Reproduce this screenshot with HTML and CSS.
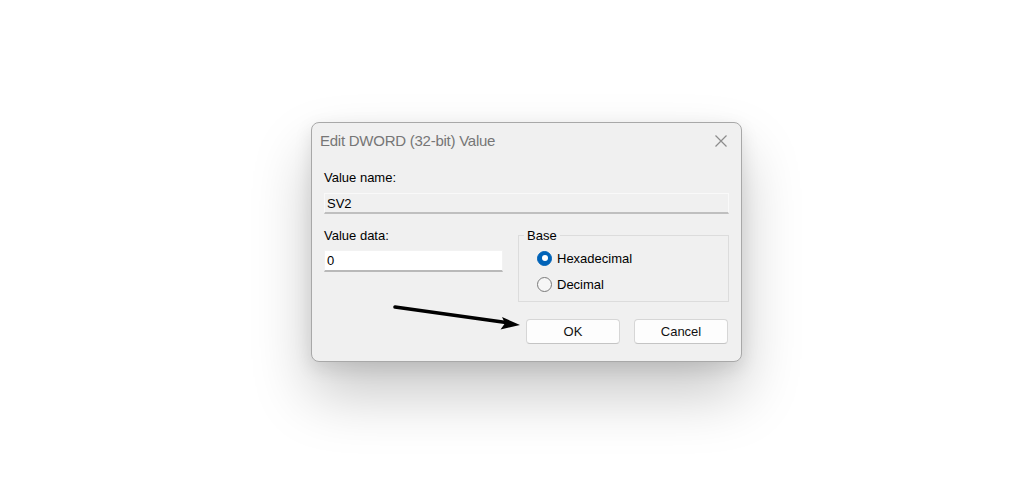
FILE: index.html
```html
<!DOCTYPE html>
<html lang="en">
<head>
<meta charset="utf-8">
<title>Edit DWORD (32-bit) Value</title>
<link rel="stylesheet" href="styles.css">
</head>
<body>
<div class="page">
  <div class="dialog">
    <div class="titlebar">
      <span class="title">Edit DWORD (32-bit) Value</span>
      <svg class="close" width="12" height="12" viewBox="0 0 12 12"><path d="M0.5 0.5 L11.5 11.5 M11.5 0.5 L0.5 11.5" stroke="#8c8c8c" stroke-width="1.2" fill="none"/></svg>
    </div>
    <div class="body">
      <div class="lbl lbl-name">Value name:</div>
      <div class="field field-ro">SV2</div>
      <div class="row">
        <div class="col-data">
          <div class="lbl lbl-data">Value data:</div>
          <div class="field field-edit">0</div>
        </div>
        <fieldset class="base">
          <legend>Base</legend>
          <div class="opt"><span class="radio radio-on"></span><span>Hexadecimal</span></div>
          <div class="opt"><span class="radio"></span><span>Decimal</span></div>
        </fieldset>
      </div>
      <div class="buttons">
        <div class="btn">OK</div>
        <div class="btn">Cancel</div>
      </div>
    </div>
  </div>
  <svg class="arrow" width="1024" height="484" viewBox="0 0 1024 484">
    <line x1="395" y1="307" x2="506" y2="322.5" stroke="#000" stroke-width="3.6" stroke-linecap="round"/>
    <polygon points="520,325 502,317 505,323.2 500.5,329.5" fill="#000"/>
  </svg>
</div>
</body>
</html>
```
FILE: styles.css
```css
html, body {
  margin: 0;
  padding: 0;
  background: #ffffff;
}
body {
  font-family: "Liberation Sans", Arial, sans-serif;
  font-size: 13px;
  color: #000;
}
.page {
  position: relative;
  width: 1024px;
  height: 484px;
  padding: 122px 0 0 311px;
  box-sizing: border-box;
  overflow: hidden;
}
.dialog {
  width: 431px;
  box-sizing: border-box;
  background: #f0f0f0;
  border: 1px solid #a8a8a8;
  border-radius: 8px;
  box-shadow: 0 32px 60px rgba(0, 0, 0, 0.22), 0 6px 18px rgba(0, 0, 0, 0.1);
}
.titlebar {
  height: 36px;
  display: flex;
  align-items: center;
  justify-content: space-between;
  padding-left: 8px;
}
.title {
  font-size: 15px;
  line-height: 18px;
  letter-spacing: -0.25px;
  color: #767676;
}
.close {
  margin-right: 14px;
  display: block;
}
.body {
  padding: 11px 12px 17px 12px;
}
.lbl {
  line-height: 15px;
  color: #000;
}
.lbl-name {
  margin-bottom: 8px;
}
.lbl-data {
  margin-bottom: 7px;
}
.field {
  box-sizing: border-box;
  display: flex;
  align-items: center;
  padding-left: 2px;
  line-height: 15px;
  color: #000;
}
.field-ro {
  height: 21px;
  background: #f0f0f0;
  border: 1px solid #f9f9f9;
  border-bottom: 2px solid #bfbfbf;
}
.field-edit {
  height: 22px;
  background: #ffffff;
  border: 1px solid #f2f2f2;
  border-bottom: 2px solid #b9b9b9;
}
.row {
  display: flex;
  gap: 15px;
  margin-top: 14px;
}
.col-data {
  width: 179px;
}
.base {
  flex: 1;
  margin: 0;
  min-width: 0;
  border: 1px solid #dcdcdc;
  padding: 2px 0 4px 5px;
}
.base legend {
  padding: 0 3px;
  line-height: 15px;
  color: #000;
}
.opt {
  height: 26px;
  display: flex;
  align-items: center;
  gap: 5px;
  padding-left: 13px;
  line-height: 15px;
}
.radio {
  width: 15px;
  height: 15px;
  box-sizing: border-box;
  border-radius: 50%;
  border: 1px solid #7a7a7a;
  background: #f6f6f6;
  display: flex;
  align-items: center;
  justify-content: center;
}
.radio-on {
  border-color: #0063b8;
  background: #0063b8;
}
.radio-on::after {
  content: "";
  width: 6px;
  height: 6px;
  border-radius: 50%;
  background: #ffffff;
}
.buttons {
  display: flex;
  justify-content: flex-end;
  gap: 14px;
  margin-top: 17px;
  padding-right: 1px;
}
.btn {
  width: 94px;
  height: 25px;
  box-sizing: border-box;
  background: #fdfdfd;
  border: 1px solid #d6d6d6;
  border-bottom-color: #c4c4c4;
  border-radius: 4px;
  display: flex;
  align-items: center;
  justify-content: center;
  line-height: 15px;
  color: #111;
}
.arrow {
  position: absolute;
  left: 0;
  top: 0;
  pointer-events: none;
}
```
